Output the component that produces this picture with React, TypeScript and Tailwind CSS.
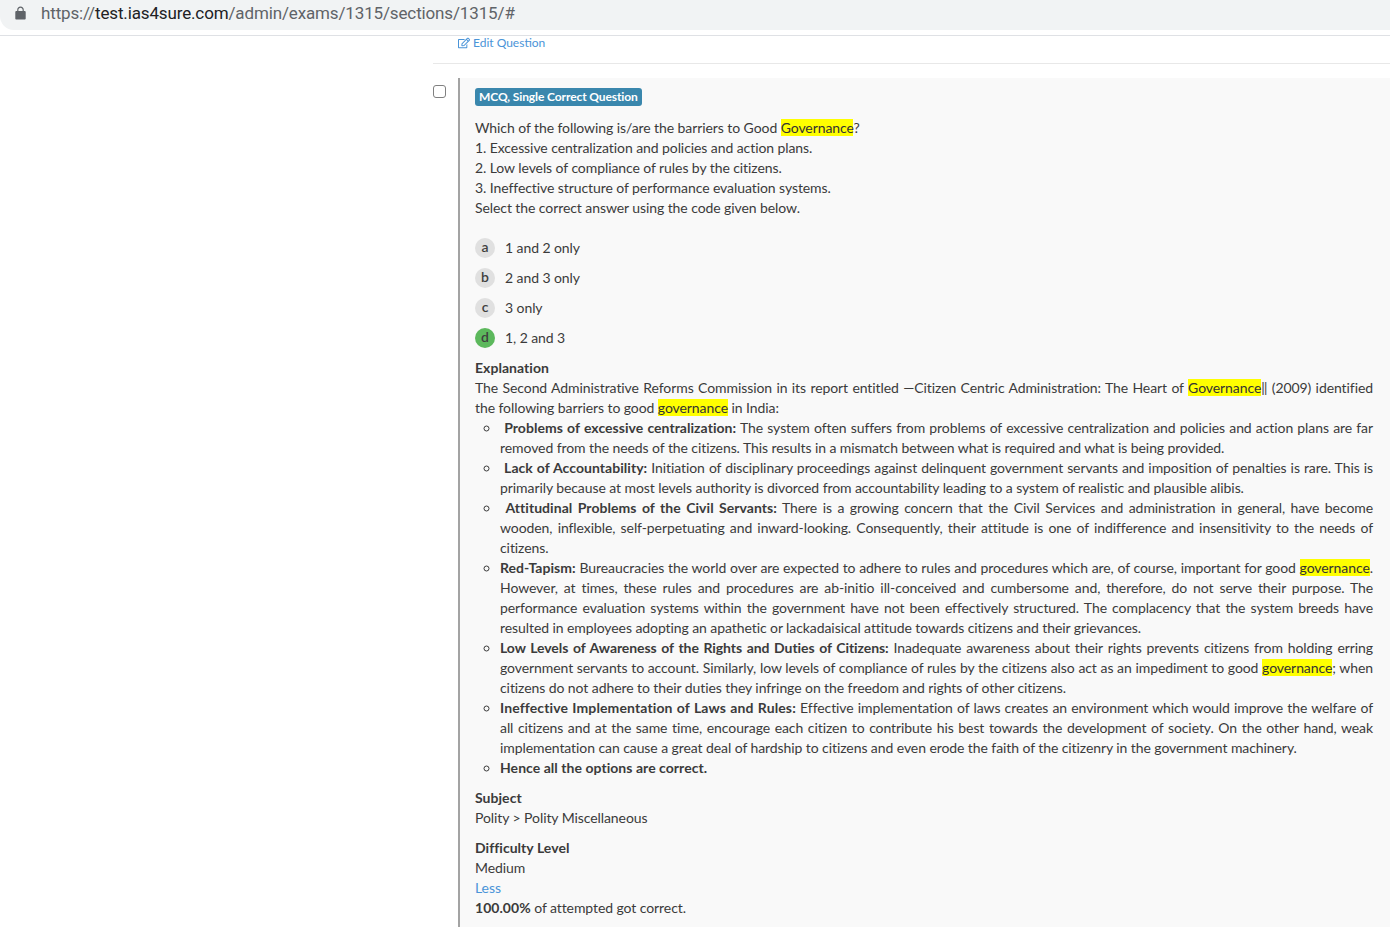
import React from 'react';
import { FaRegEdit } from 'react-icons/fa';

function Hl({ children }: { children: React.ReactNode }) {
  return <mark className="bg-[#ffff00] text-[#333]">{children}</mark>;
}

function B({ children }: { children: React.ReactNode }) {
  return <b className="tracking-[0.04px]">{children}</b>;
}

function Option({ letter, text, correct }: { letter: string; text: string; correct?: boolean }) {
  return (
    <div className="flex items-center h-[30px]">
      <span
        className={
          correct
            ? 'w-5 h-5 rounded-full bg-[#5cb85c] flex items-center justify-center text-[14px] leading-none pb-[2px] font-semibold text-[#3f3f3f]'
            : 'w-5 h-5 rounded-full bg-[#e0e0e0] flex items-center justify-center text-[14px] leading-none pb-[2px] font-semibold text-[#3f3f3f]'
        }
      >
        {letter}
      </span>
      <span className="ml-[10px]">{text}</span>
    </div>
  );
}

export default function App() {
  return (
    <div className="h-[927px] overflow-hidden bg-white font-['Lato',sans-serif] text-[14px] leading-5 tracking-[-0.08px] text-[#3b3b3b]">
      <div className="h-[36px] border-b border-[#dfe1e5]">
        <div className="h-[30px] bg-[#f1f3f4] rounded-bl-[14px] flex items-center pl-[15px] pb-[4px]">
          <svg width="11" height="14" viewBox="0 0 11 14" fill="#5f6368">
            <path d="M5.5 0.5C3.6 0.5 2.2 2 2.2 3.9V5H1.4C0.8 5 0.3 5.5 0.3 6.1V12.4C0.3 13 0.8 13.5 1.4 13.5H9.6C10.2 13.5 10.7 13 10.7 12.4V6.1C10.7 5.5 10.2 5 9.6 5H8.8V3.9C8.8 2 7.4 0.5 5.5 0.5ZM3.4 5V3.9C3.4 2.7 4.3 1.7 5.5 1.7C6.7 1.7 7.6 2.7 7.6 3.9V5H3.4Z" />
          </svg>
          <span className="ml-[15px] font-['Roboto',sans-serif] text-[17px] tracking-[-0.14px] text-[#5f6368] whitespace-nowrap">
            https://<span className="text-[#202124]">test.ias4sure.com</span>/admin/exams/1315/sections/1315/#
          </span>
        </div>
      </div>

      <div className="ml-[433px]">
        <div className="h-[28px] border-b border-[#e8e8e8] pl-[25px] flex items-start">
          <a className="flex items-center gap-[3px] text-[12px] leading-[14px] tracking-normal text-[#4a94d8]">
            <FaRegEdit size={12} />
            Edit Question
          </a>
        </div>

        <div className="flex mt-[14px]">
          <div className="w-[25px] shrink-0 pt-[7px]">
            <div className="w-[13px] h-[13px] rounded-[3px] border border-[#808080] bg-white" />
          </div>
          <div className="flex-1 border-l-[2px] border-[#a3a3a3] bg-[#f9f9f9] pl-[15px] pr-[17px] pt-[10px] pb-8">
            <span className="block w-fit h-[18px] rounded-[3px] bg-[#3a87ad] px-[4px] text-[12px] leading-[18px] font-bold text-white tracking-[-0.1px] whitespace-nowrap">
              MCQ, Single Correct Question
            </span>

            <div className="mt-[12px]">
              <p>
                Which of the following is/are the barriers to Good <Hl>Governance</Hl>?
              </p>
              <p>1. Excessive centralization and policies and action plans.</p>
              <p>2. Low levels of compliance of rules by the citizens.</p>
              <p>3. Ineffective structure of performance evaluation systems.</p>
              <p>Select the correct answer using the code given below.</p>
            </div>

            <div className="mt-[15px]">
              <Option letter="a" text="1 and 2 only" />
              <Option letter="b" text="2 and 3 only" />
              <Option letter="c" text="3 only" />
              <Option letter="d" text="1, 2 and 3" correct />
            </div>

            <div className="mt-[5px]">
              <p>
                <B>Explanation</B>
              </p>
              <p className="text-justify">
                The Second Administrative Reforms Commission in its report entitled —Citizen Centric Administration: The
                Heart of <Hl>Governance</Hl>‖ (2009) identified the following barriers to good <Hl>governance</Hl> in India:
              </p>
              <ul className="list-[circle] pl-[25px] text-justify">
                <li>
                  &nbsp;<B>Problems of excessive centralization:</B> The system often suffers from problems of excessive
                  centralization and policies and action plans are far removed from the needs of the citizens. This results
                  in a mismatch between what is required and what is being provided.
                </li>
                <li>
                  &nbsp;<B>Lack of Accountability:</B> Initiation of disciplinary proceedings against delinquent government
                  servants and imposition of penalties is rare. This is primarily because at most levels authority is
                  divorced from accountability leading to a system of realistic and plausible alibis.
                </li>
                <li>
                  &nbsp;<B>Attitudinal Problems of the Civil Servants:</B> There is a growing concern that the Civil Services
                  and administration in general, have become wooden, inflexible, self-perpetuating and inward-looking.
                  Consequently, their attitude is one of indifference and insensitivity to the needs of citizens.
                </li>
                <li>
                  <B>Red-Tapism:</B> Bureaucracies the world over are expected to adhere to rules and procedures which are,
                  of course, important for good <Hl>governance</Hl>. However, at times, these rules and procedures are
                  ab-initio ill-conceived and cumbersome and, therefore, do not serve their purpose. The performance
                  evaluation systems within the government have not been effectively structured. The complacency that the
                  system breeds have resulted in employees adopting an apathetic or lackadaisical attitude towards citizens
                  and their grievances.
                </li>
                <li>
                  <b className="tracking-[-0.08px]">Low Levels of Awareness of the Rights and Duties of Citizens:</b> Inadequate
                  awareness about their rights prevents citizens from holding erring government servants to account.
                  Similarly, low levels of compliance of rules by the citizens also act as an impediment to good{' '}
                  <Hl>governance</Hl>; when citizens do not adhere to their duties they infringe on the freedom and rights of
                  other citizens.
                </li>
                <li>
                  <b className="tracking-[0.12px]">Ineffective Implementation of Laws and Rules:</b> Effective implementation of
                  laws creates an environment which would improve the welfare of all citizens and at the same time, encourage
                  each citizen to contribute his best towards the development of society. On the other hand, weak
                  implementation can cause a great deal of hardship to citizens and even erode the faith of the citizenry in
                  the government machinery.
                </li>
                <li>
                  <B>Hence all the options are correct.</B>
                </li>
              </ul>
            </div>

            <div className="mt-[10px]">
              <p>
                <B>Subject</B>
              </p>
              <p>Polity &gt; Polity Miscellaneous</p>
            </div>
            <div className="mt-[10px]">
              <p>
                <B>Difficulty Level</B>
              </p>
              <p>Medium</p>
              <a className="block text-[#4a94d8]">Less</a>
              <p>
                <B>100.00%</B> of attempted got correct.
              </p>
            </div>
          </div>
        </div>
      </div>
    </div>
  );
}
